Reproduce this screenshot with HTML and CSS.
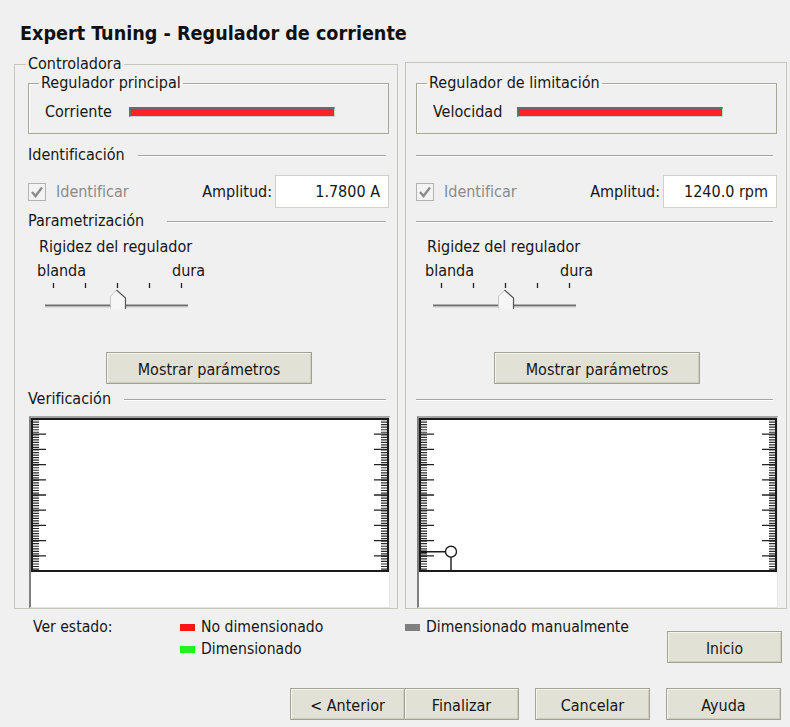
FILE: index.html
```html
<!DOCTYPE html>
<html lang="es">
<head>
<meta charset="utf-8">
<title>Expert Tuning - Regulador de corriente</title>
<link rel="stylesheet" href="styles.css">
</head>
<body>
<div class="window">
  <h1 class="title">Expert Tuning - Regulador de corriente</h1>

  <div class="panels">
    <!-- Current controller column -->
    <fieldset class="group outer">
      <legend>Controladora</legend>
      <fieldset class="group inner">
        <legend>Regulador principal</legend>
        <div class="meter-row">
          <span class="meter-label">Corriente</span>
          <span class="meter"></span>
        </div>
      </fieldset>

      <div class="section"><span>Identificación</span></div>
      <div class="ident-row">
        <span class="check">
          <svg width="19" height="18" viewBox="0 0 19 18"><rect x="0.5" y="0.5" width="17" height="17" fill="#f3f3f3" stroke="#b2b2b2"/><path d="M4 9 L7.5 13 L14 4.5" fill="none" stroke="#8c8c8c" stroke-width="2.4"/></svg>
          <span class="check-text">Identificar</span>
        </span>
        <span class="amp-label">Amplitud:</span>
        <div class="amp">1.7800 A</div>
      </div>

      <div class="section wide"><span>Parametrización</span></div>
      <div class="slider-title">Rigidez del regulador</div>
      <div class="slider-ends"><span>blanda</span><span>dura</span></div>
      <svg class="slider" width="150" height="30" viewBox="0 0 150 30">
        <g stroke="#222" stroke-width="1.3">
          <path d="M12.5 2V7M44.5 2V7M76.5 2V7M108.5 2V7M140.5 2V7"/>
        </g>
        <rect x="4" y="23.5" width="143" height="2" fill="#6f6f6f"/>
        <rect x="4" y="25.5" width="143" height="1" fill="#c9c9c9"/>
        <polygon points="69,27.5 69,15 75.5,9 85,17 85,27.5" fill="#f6f6f6"/>
        <path d="M69.5 27.5V15.2L75.5 9.2" fill="none" stroke="#c4c4c4"/>
        <path d="M75.5 9L84.5 17V28" fill="none" stroke="#555" stroke-width="1.2"/>
      </svg>

      <button class="btn params">Mostrar parámetros</button>

      <div class="section"><span>Verificación</span></div>
      <div class="chart">
        <svg class="plot" width="358" height="155" viewBox="0 0 358 155">
          <!-- minor ticks drawn as a dashed wide stroke -->
          <path stroke="#2b2b2b" stroke-width="6" stroke-dasharray="1.2 1.333" fill="none" d="M5 1V153M353 1V153"/>
          <path stroke="#222" stroke-width="1.3" d="M2 16.2H15M2 31.4H15M2 46.6H15M2 61.8H15M2 77H15M2 92.2H15M2 107.4H15M2 122.6H15M2 137.8H15M343 16.2H356M343 31.4H356M343 46.6H356M343 61.8H356M343 77H356M343 92.2H356M343 107.4H356M343 122.6H356M343 137.8H356"/>
          <rect x="1" y="1" width="356" height="152" fill="none" stroke="#1b1b1b" stroke-width="2"/>
        </svg>
      </div>
    </fieldset>

    <!-- Limiting controller column -->
    <div class="group side">
      <fieldset class="group inner">
        <legend>Regulador de limitación</legend>
        <div class="meter-row">
          <span class="meter-label">Velocidad</span>
          <span class="meter"></span>
        </div>
      </fieldset>

      <div class="section blank"></div>
      <div class="ident-row">
        <span class="check">
          <svg width="19" height="18" viewBox="0 0 19 18"><rect x="0.5" y="0.5" width="17" height="17" fill="#f3f3f3" stroke="#b2b2b2"/><path d="M4 9 L7.5 13 L14 4.5" fill="none" stroke="#8c8c8c" stroke-width="2.4"/></svg>
          <span class="check-text">Identificar</span>
        </span>
        <span class="amp-label">Amplitud:</span>
        <div class="amp">1240.0 rpm</div>
      </div>

      <div class="section blank"></div>
      <div class="slider-title">Rigidez del regulador</div>
      <div class="slider-ends"><span>blanda</span><span>dura</span></div>
      <svg class="slider" width="150" height="30" viewBox="0 0 150 30">
        <g stroke="#222" stroke-width="1.3">
          <path d="M12.5 2V7M44.5 2V7M76.5 2V7M108.5 2V7M140.5 2V7"/>
        </g>
        <rect x="4" y="23.5" width="143" height="2" fill="#6f6f6f"/>
        <rect x="4" y="25.5" width="143" height="1" fill="#c9c9c9"/>
        <polygon points="69,27.5 69,15 75.5,9 85,17 85,27.5" fill="#f6f6f6"/>
        <path d="M69.5 27.5V15.2L75.5 9.2" fill="none" stroke="#c4c4c4"/>
        <path d="M75.5 9L84.5 17V28" fill="none" stroke="#555" stroke-width="1.2"/>
      </svg>

      <button class="btn params">Mostrar parámetros</button>

      <div class="section blank"></div>
      <div class="chart">
        <svg class="plot" width="358" height="155" viewBox="0 0 358 155">
          <path stroke="#2b2b2b" stroke-width="6" stroke-dasharray="1.2 1.333" fill="none" d="M5 1V153M353 1V153"/>
          <path stroke="#222" stroke-width="1.3" d="M2 16.2H15M2 31.4H15M2 46.6H15M2 61.8H15M2 77H15M2 92.2H15M2 107.4H15M2 122.6H15M2 137.8H15M343 16.2H356M343 31.4H356M343 46.6H356M343 61.8H356M343 77H356M343 92.2H356M343 107.4H356M343 122.6H356M343 137.8H356"/>
          <!-- operating point marker -->
          <path stroke="#1b1b1b" stroke-width="1.4" fill="none" d="M2 133.7H26.5M32 139.3V153"/>
          <rect x="2" y="132.6" width="6" height="2.4" fill="#111"/>
          <circle cx="32" cy="133.7" r="5.5" fill="#fff" stroke="#1b1b1b" stroke-width="1.4"/>
          <rect x="1" y="1" width="356" height="152" fill="none" stroke="#1b1b1b" stroke-width="2"/>
        </svg>
      </div>
    </div>
  </div>

  <div class="status">
    <div class="status-label">Ver estado:</div>
    <div class="status-col">
      <div class="state"><span class="swatch red"></span>No dimensionado</div>
      <div class="state"><span class="swatch green"></span>Dimensionado</div>
    </div>
    <div class="status-col manual">
      <div class="state"><span class="swatch grey"></span>Dimensionado manualmente</div>
    </div>
    <button class="btn start">Inicio</button>
  </div>

  <div class="actions">
    <button class="btn action">&lt; Anterior</button>
    <button class="btn action joined">Finalizar</button>
    <button class="btn action spaced">Cancelar</button>
    <button class="btn action spaced">Ayuda</button>
  </div>
</div>
</body>
</html>
```

FILE: styles.css
```css
html, body {
  margin: 0;
  padding: 0;
}

body {
  background: #f0f0f0;
  color: #161616;
  font-family: "DejaVu Sans Condensed", "DejaVu Sans", sans-serif;
  font-stretch: condensed;
  font-size: 16px;
  line-height: 18px;
}

.window {
  width: 790px;
  height: 727px;
  overflow: hidden;
}

.title {
  margin: 0;
  padding: 23px 0 0 20px;
  font-size: 19.6px;
  line-height: 22px;
  font-weight: bold;
  color: #111;
}

/* two side-by-side controller columns */
.panels {
  display: flex;
  align-items: flex-start;
  margin-top: 11px;
}

.group {
  margin: 0;
  min-width: 0;
  box-sizing: border-box;
}

.group legend {
  font-size: 16px;
  line-height: 16px;
  padding: 0 2px;
}

.outer {
  width: 384px;
  margin-left: 14px;
  padding: 3px 8px 0 13px;
  border: 1px solid #c6c6be;
}

.outer > legend {
  margin-left: -2px;
}

.side {
  width: 382px;
  margin-left: 7px;
  margin-top: 6px;
  padding: 12px 9px 0 10px;
  border: 1px solid #c6c6be;
}

.inner {
  width: 361px;
  padding: 12px 0 12px 16px;
  border: 1px solid #a8a898;
  box-shadow: inset 1px 1px 0 #fff;
}

.inner > legend {
  margin-left: -6px;
}

.meter-row {
  display: flex;
  align-items: center;
  height: 18px;
}

.meter-label {
  width: 84px;
}

.meter {
  width: 206px;
  height: 10px;
  box-sizing: border-box;
  background: #ff2424;
  border-top: 2px solid #6b6b6b;
  border-left: 2px solid #6b6b6b;
  border-right: 1px solid #cfcfcf;
  border-bottom: 1px solid #cfcfcf;
}

/* heading followed by an etched rule */
.section {
  display: flex;
  align-items: center;
  height: 18px;
  margin-top: 12px;
}

.section::after {
  content: "";
  flex: 1;
  height: 0;
  margin: 1px 3px 0 13px;
  border-top: 1px solid #a4a4a4;
  border-bottom: 1px solid #fff;
}

.section.wide {
  margin-top: 4px;
}

.section.wide::after {
  margin-left: 23px;
}

.section.blank::after {
  margin-left: 0;
  margin-right: 4px;
}

.ident-row {
  display: flex;
  align-items: center;
  height: 33px;
  margin-top: 11px;
}

.ident-row + .section {
  margin-top: 4px;
}

.check {
  display: flex;
  align-items: center;
  gap: 9px;
}

.check svg {
  display: block;
}

.check-text {
  color: #8b8b8b;
}

.amp-label {
  margin-left: auto;
  margin-right: 3px;
}

.amp {
  width: 114px;
  height: 33px;
  box-sizing: border-box;
  border: 1px solid #d2d2c2;
  background: #fff;
  text-align: right;
  padding-right: 8px;
  line-height: 31px;
}

.slider-title {
  margin-top: 8px;
  padding-left: 11px;
}

.slider-ends {
  display: flex;
  justify-content: space-between;
  width: 168px;
  margin-top: 6px;
  margin-left: 9px;
}

.slider {
  display: block;
  margin-top: 1px;
  margin-left: 13px;
}

.btn {
  display: block;
  box-sizing: border-box;
  height: 32px;
  padding: 3px 0 0;
  margin: 0;
  font: inherit;
  color: #161616;
  background: #e1e1d5;
  border: 1px solid #a3a393;
  box-shadow: inset 1px 1px 0 #f4f4ec, inset -1px -1px 0 #cdcdc0;
}

.params {
  width: 206px;
  margin-top: 41px;
  margin-left: 78px;
}

.params + .section {
  margin-top: 6px;
}

/* verification plot */
.chart {
  width: 361px;
  height: 192px;
  box-sizing: border-box;
  margin-top: 8px;
  margin-left: 1px;
  background: #fff;
  border-left: 2px solid #7e7e7e;
  border-top: 2px solid #a6a6a6;
  border-right: 1px solid #e4e4e4;
  border-bottom: 1px solid #e4e4e4;
}

.plot {
  display: block;
}

/* status legend */
.status {
  display: flex;
  align-items: flex-start;
  margin-top: 9px;
  padding-left: 33px;
  font-size: 15.6px;
}

.status-label {
  width: 147px;
}

.status-col {
  display: flex;
  flex-direction: column;
  gap: 4px;
  width: 225px;
}

.status-col.manual {
  width: auto;
  flex: 1;
}

.state {
  display: flex;
  align-items: center;
}

.swatch {
  width: 15px;
  height: 7px;
  margin-right: 6px;
}

.swatch.red { background: #ff1414; }
.swatch.green { background: #22f022; }
.swatch.grey { background: #7f7f7f; }

.start {
  width: 115px;
  margin-top: 13px;
  margin-right: 8px;
}

.actions {
  display: flex;
  margin-top: 25px;
  padding-left: 290px;
}

.action {
  width: 115px;
}

.action.joined {
  margin-left: -1px;
}

.action.spaced {
  margin-left: 16px;
}
```
